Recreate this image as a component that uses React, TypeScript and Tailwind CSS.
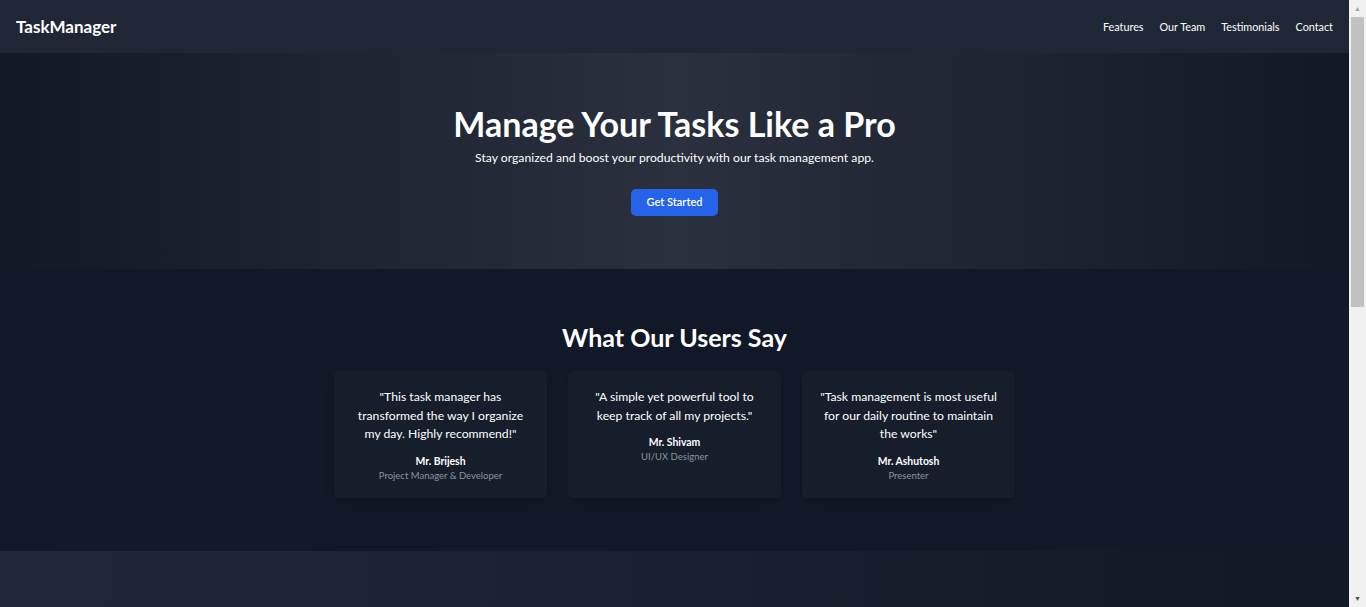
const testimonials = [
	{
		quote: '"This task manager has transformed the way I organize my day. Highly recommend!"',
		name: "Mr. Brijesh",
		role: "Project Manager & Developer",
	},
	{
		quote: '"A simple yet powerful tool to keep track of all my projects."',
		name: "Mr. Shivam",
		role: "UI/UX Designer",
	},
	{
		quote: '"Task management is most useful for our daily routine to maintain the works"',
		name: "Mr. Ashutosh",
		role: "Presenter",
	},
];

const links = ["Features", "Our Team", "Testimonials", "Contact"];

function Navbar() {
	return (
		<nav className="flex h-[53px] items-center justify-between bg-[#1f2737] px-4">
			<a href="#" className="text-[17px] font-bold text-white">
				TaskManager
			</a>
			<ul className="flex items-center gap-[16px] pt-[1px] text-[10.8px] text-white">
				{links.map((l) => (
					<li key={l}>
						<a href="#">{l}</a>
					</li>
				))}
			</ul>
		</nav>
	);
}

function Hero() {
	return (
		<section className="flex h-[216px] flex-col items-center bg-gradient-to-r from-[#121826] via-[#2a303d] to-[#121826] pt-[50px] text-center text-white">
			<h1 className="text-[34px] leading-[42px] font-bold">Manage Your Tasks Like a Pro</h1>
			<p className="mt-[3px] text-[12.2px] leading-[20px]">
				Stay organized and boost your productivity with our task management app.
			</p>
			<button className="mt-[21px] h-[27px] rounded-[5px] bg-[#2563eb] px-4 text-[11px] font-semibold text-white">
				Get Started
			</button>
		</section>
	);
}

function Testimonials() {
	return (
		<section className="bg-[#111827] pt-[52px] pb-[53px]">
			<h2 className="text-center text-[25px] leading-[32px] font-bold text-white">What Our Users Say</h2>
			<div className="mx-auto mt-[18px] grid w-[681px] grid-cols-3 gap-[21px]">
				{testimonials.map((t) => (
					<div
						key={t.name}
						className="h-[127px] rounded-[5px] bg-[#161d2b] px-4 pt-[17px] text-center shadow-lg"
					>
						<p className="text-[12.2px] leading-[18.5px] text-white">{t.quote}</p>
						<p className="mt-[10px] text-[10.4px] leading-[15px] font-bold text-white">{t.name}</p>
						<p className="text-[9.5px] leading-[14px] text-[#8b93a1]">{t.role}</p>
					</div>
				))}
			</div>
		</section>
	);
}

function Scrollbar() {
	return (
		<div className="flex w-[17px] shrink-0 flex-col bg-[#f1f1f1]">
			<div className="flex h-[17px] items-center justify-center text-[7px] text-[#a3a3a3]">▲</div>
			<div className="mx-[2px] h-[290px] bg-[#c1c1c1]" />
			<div className="flex-1" />
			<div className="flex h-[17px] items-center justify-center text-[7px] text-[#505050]">▼</div>
		</div>
	);
}

export default function App() {
	return (
		<div className="flex h-screen overflow-hidden bg-[#111827] font-['Lato',sans-serif]">
			<main className="min-w-0 flex-1">
				<Navbar />
				<Hero />
				<Testimonials />
				<section className="h-[400px] bg-gradient-to-r from-[#202838] to-[#121826]" />
			</main>
			<Scrollbar />
		</div>
	);
}
